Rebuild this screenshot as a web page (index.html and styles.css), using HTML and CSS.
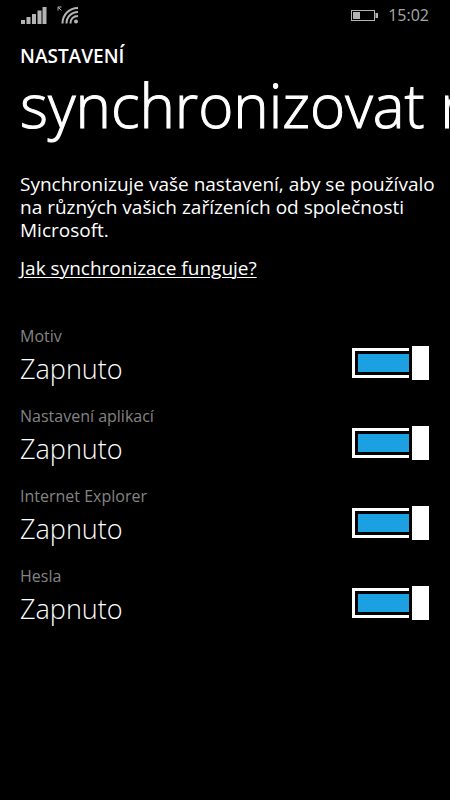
FILE: index.html
```html
<!DOCTYPE html>
<html lang="cs">
<head>
<meta charset="utf-8">
<meta name="viewport" content="width=device-width, initial-scale=1">
<title>Nastavení</title>
<link rel="stylesheet" href="styles.css">
</head>
<body>
<header class="status">
  <div class="status-group">
    <svg class="signal" width="27" height="18" viewBox="0 0 27 18" aria-hidden="true">
      <path d="M1 14h4v4H1zM6.500 11h4v7h-4zM12 8h4v10h-4zM17.500 4.500h4V18h-4zM22.500 1h4v17h-4z"/>
    </svg>
    <svg class="wifi" width="22" height="18" viewBox="0 0 22 18" aria-hidden="true">
      <path class="arrow" d="M1 4.500V1h3.500M1.500 1.500l3 3"/>
      <path class="arc" d="M5.500 17.500C5.500 9 12 2 21 2M9.500 17.500C9.500 11 14.500 6 21 6M13.500 17.500C13.500 13 16.500 10 21 10"/>
      <circle cx="19" cy="15.500" r="2"/>
    </svg>
  </div>
  <div class="status-group">
    <svg class="battery" width="28" height="12" viewBox="0 0 28 12" aria-hidden="true">
      <rect class="case" x="1.500" y="1.500" width="23" height="10"/>
      <path d="M3 3h7v7H3zM25.500 4H28v5h-2.500z"/>
    </svg>
    <time>15:02</time>
  </div>
</header>
<main>
  <p class="app">NASTAVENÍ</p>
  <h1>synchronizovat nastavení</h1>
  <p class="intro">Synchronizuje vaše nastavení, aby se používalo na různých vašich zařízeních od společnosti Microsoft.</p>
  <a class="more" href="#">Jak synchronizace funguje?</a>
  <ul class="options">
    <li>
      <label for="theme"><span class="name">Motiv</span><span class="state">Zapnuto</span></label>
      <input class="toggle" type="checkbox" id="theme" checked>
    </li>
    <li>
      <label for="apps"><span class="name">Nastavení aplikací</span><span class="state">Zapnuto</span></label>
      <input class="toggle" type="checkbox" id="apps" checked>
    </li>
    <li>
      <label for="browser"><span class="name">Internet Explorer</span><span class="state">Zapnuto</span></label>
      <input class="toggle" type="checkbox" id="browser" checked>
    </li>
    <li>
      <label for="passwords"><span class="name">Hesla</span><span class="state">Zapnuto</span></label>
      <input class="toggle" type="checkbox" id="passwords" checked>
    </li>
  </ul>
</main>
</body>
</html>
```
FILE: styles.css
```css
* {
  box-sizing: border-box;
  margin: 0;
  padding: 0;
}

body {
  min-height: 100vh;
  background: #000;
  color: #fff;
  font-family: "Open Sans", "Noto Sans", sans-serif;
  font-size: 19px;
  overflow-x: hidden;
}

.status {
  display: flex;
  justify-content: space-between;
  align-items: center;
  height: 30px;
  padding: 0 21px 0 20px;
  color: #a8a8a8;
  font-size: 16px;
}

.status-group {
  display: flex;
  align-items: center;
  gap: 10px;
}

.status svg {
  fill: #b4b4b4;
}

.status .arc,
.status .arrow,
.status .case {
  fill: none;
  stroke: #b4b4b4;
}

.status .arc {
  stroke-width: 2;
}

main {
  padding: 14px 20px 20px;
}

.app {
  font-weight: 600;
  line-height: 24px;
}

h1 {
  font-size: 60px;
  font-weight: 300;
  line-height: 74px;
  white-space: nowrap;
  -webkit-text-stroke: 1px #fff;
}

.intro {
  margin-top: 31px;
  margin-right: -16px;
  line-height: 23px;
}

.more {
  display: inline-block;
  margin-top: 15px;
  color: #fff;
  line-height: 23px;
  text-decoration-thickness: 1px;
  text-underline-offset: 2px;
}

.options {
  display: grid;
  gap: 20px;
  margin-top: 44px;
  list-style: none;
}

.options li {
  display: flex;
  justify-content: space-between;
  align-items: flex-end;
  height: 60px;
}

.name,
.state {
  display: block;
}

.name {
  color: #848484;
  font-size: 16px;
  line-height: 22px;
}

.state {
  margin-bottom: -6px;
  font-size: 27px;
  font-weight: 300;
  line-height: 44px;
}

.toggle {
  position: relative;
  width: 77px;
  height: 34px;
  margin: 0 1px 5px 0;
  appearance: none;
}

.toggle::before {
  content: "";
  position: absolute;
  inset: 2px 20px 2px 0;
  padding: 3px 0 3px 3px;
  border: 3px solid #fff;
  border-right: 0;
}

.toggle:checked::before {
  background: #1ba1e2 content-box;
}

.toggle::after {
  content: "";
  position: absolute;
  inset: 0 0 0 auto;
  width: 17px;
  background: #fff;
}

.toggle:not(:checked)::after {
  inset: 0 auto 0 0;
}
```
